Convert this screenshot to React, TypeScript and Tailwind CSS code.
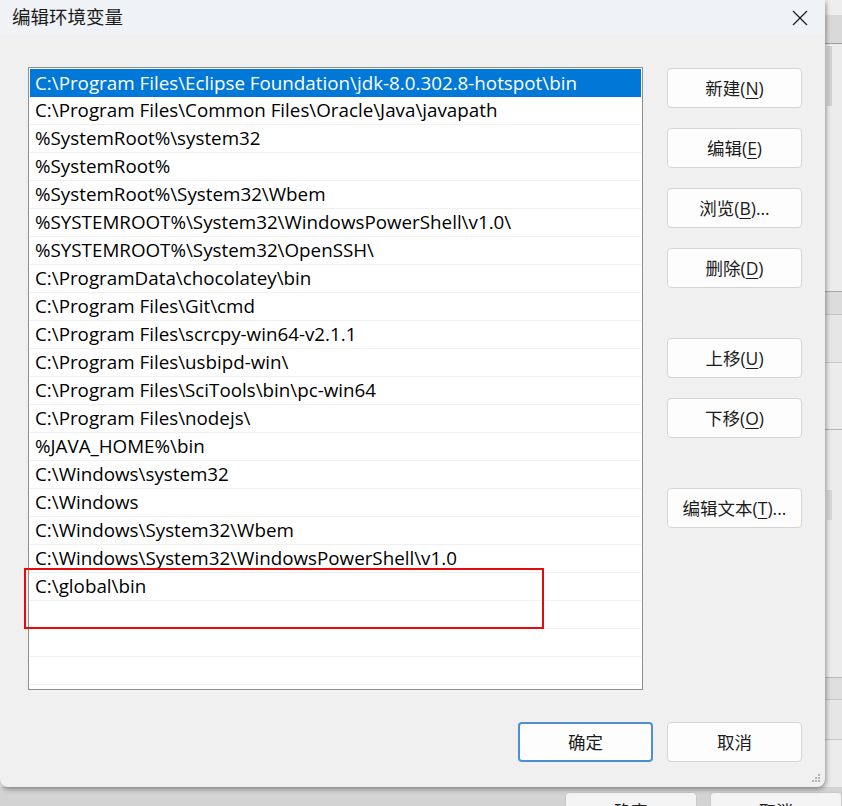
import React from "react";

const rows = [
  "C:\\Program Files\\Eclipse Foundation\\jdk-8.0.302.8-hotspot\\bin",
  "C:\\Program Files\\Common Files\\Oracle\\Java\\javapath",
  "%SystemRoot%\\system32",
  "%SystemRoot%",
  "%SystemRoot%\\System32\\Wbem",
  "%SYSTEMROOT%\\System32\\WindowsPowerShell\\v1.0\\",
  "%SYSTEMROOT%\\System32\\OpenSSH\\",
  "C:\\ProgramData\\chocolatey\\bin",
  "C:\\Program Files\\Git\\cmd",
  "C:\\Program Files\\scrcpy-win64-v2.1.1",
  "C:\\Program Files\\usbipd-win\\",
  "C:\\Program Files\\SciTools\\bin\\pc-win64",
  "C:\\Program Files\\nodejs\\",
  "%JAVA_HOME%\\bin",
  "C:\\Windows\\system32",
  "C:\\Windows",
  "C:\\Windows\\System32\\Wbem",
  "C:\\Windows\\System32\\WindowsPowerShell\\v1.0",
  "C:\\global\\bin",
  "",
  "",
  "",
];

const FONT = '"Open Sans", "Noto Sans CJK SC", sans-serif';

function Btn({
  label,
  hot,
  tail = "",
  extra = "",
  primary = false,
}: {
  label: string;
  hot: string;
  tail?: string;
  extra?: string;
  primary?: boolean;
}) {
  return (
    <div
      className={`flex h-[40px] w-[135px] items-center justify-center rounded-[4px] bg-[#fdfdfd] text-[17.5px] text-[#1b1b1b] ${
        primary ? "border-2 border-[#4f8fd0]" : "border border-[#d5d5d5]"
      } ${extra}`}
    >
      <span>
        {label}
        {hot ? (
          <>
            (<span className="underline underline-offset-[3px]">{hot}</span>)
          </>
        ) : null}
        {tail}
      </span>
    </div>
  );
}

export default function App() {
  return (
    <div
      className="relative h-[806px] w-[842px] overflow-hidden bg-[#e4e4e4]"
      style={{ fontFamily: FONT }}
    >
      {/* window behind the dialog */}
      <div className="absolute inset-0 flex flex-col">
        <div className="h-[15px] shrink-0 bg-[#eeeeee]" />
        <div className="h-[29px] shrink-0 border-b border-[#9e9e9e] bg-[#d9d9d9]" />
        <div className="relative h-[248px] shrink-0 border-b border-[#a9a9a9] bg-[#ececec]">
          <div className="absolute right-[10px] top-[2px] h-[60px] w-[5px] bg-[#d2d2d2]" />
        </div>
        <div className="h-[23px] shrink-0 border-b border-[#c4c4c4] bg-[#dcdcdc]" />
        <div className="h-[48px] shrink-0 border-b border-[#c8c8c8] bg-[#e6e6e6]" />
        <div className="h-[67px] shrink-0 border-b border-[#b5b5b5] bg-[#ececec]" />
        <div className="relative h-[248px] shrink-0 border-b border-[#b8b8b8] bg-[#ececec]">
          <div className="absolute right-[10px] top-[60px] h-[30px] w-[5px] bg-[#d6d6d6]" />
        </div>
        <div className="h-[22px] shrink-0 border-b border-[#c6c6c6] bg-[#dedede]" />
        <div className="h-[40px] shrink-0 border-b border-[#c6c6c6] bg-[#e6e6e6]" />
        <div className="flex-1 bg-[#ececec]" />
        <div className="h-[19px] shrink-0 bg-[#d3d3d3] pl-[565px] pt-[5px]">
          <div className="flex gap-[13px]">
            <div className="flex h-[40px] w-[135px] justify-center rounded-[4px] border border-[#c9c9c9] bg-[#f4f4f4] pt-[6px] text-[17px] text-[#222]">
              确定
            </div>
            <div className="flex h-[40px] w-[135px] justify-center rounded-[4px] border border-[#c9c9c9] bg-[#f4f4f4] pt-[6px] text-[17px] text-[#222]">
              取消
            </div>
          </div>
        </div>
      </div>

      {/* dialog window */}
      <div className="absolute left-0 top-0 flex h-[787px] w-[825px] flex-col overflow-hidden rounded-b-[8px] bg-[#f0f0f0] shadow-[1px_2px_5px_rgba(0,0,0,0.4)]">
        {/* title bar */}
        <div className="flex h-[34px] shrink-0 items-center justify-between bg-[#eff2f6] pl-[12px] pr-[16px]">
          <span className="text-[18.5px] text-[#1a1a1a]">编辑环境变量</span>
          <svg width="16" height="16" viewBox="0 0 16 16" className="mr-[1px] mt-[2px]">
            <path d="M1 1 L15 15 M15 1 L1 15" stroke="#1f1f1f" strokeWidth="1.3" fill="none" />
          </svg>
        </div>

        {/* body */}
        <div className="flex pl-[28px] pt-[33px]">
          <div className="relative h-[623px] w-[615px] border border-[#8e8e8e] bg-white p-px">
            <div className="flex flex-col">
              {rows.map((r, i) => (
                <div
                  key={i}
                  className={`flex h-[28px] items-center whitespace-nowrap pl-[5px] text-[18.8px] leading-none ${
                    i === 0
                      ? "bg-[#0078d7] text-white"
                      : "border-b border-[#f0f0f0] text-black"
                  }`}
                >
                  {r}
                </div>
              ))}
            </div>
            <div className="absolute left-[-5px] top-[500px] h-[61px] w-[520px] border-2 border-[#e30b0b]" />
          </div>

          <div className="ml-[24px] flex flex-col pt-px">
            <Btn label="新建" hot="N" />
            <Btn label="编辑" hot="E" extra="mt-[20px]" />
            <Btn label="浏览" hot="B" tail="..." extra="mt-[20px]" />
            <Btn label="删除" hot="D" extra="mt-[20px]" />
            <Btn label="上移" hot="U" extra="mt-[50px]" />
            <Btn label="下移" hot="O" extra="mt-[20px]" />
            <Btn label="编辑文本" hot="T" tail="..." extra="mt-[50px]" />
          </div>
        </div>

        <div className="mt-[32px] flex justify-end gap-[14px] pr-[23px]">
          <Btn label="确定" hot="" primary />
          <Btn label="取消" hot="" />
        </div>

        {/* resize grip */}
        <div className="relative flex-1">
          <svg width="10" height="10" viewBox="0 0 10 10" className="absolute bottom-[4px] right-[4px]">
            <rect x="7" y="1" width="2" height="2" fill="#b5b5b5" />
            <rect x="4" y="4" width="2" height="2" fill="#b5b5b5" />
            <rect x="7" y="4" width="2" height="2" fill="#b5b5b5" />
            <rect x="1" y="7" width="2" height="2" fill="#b5b5b5" />
            <rect x="4" y="7" width="2" height="2" fill="#b5b5b5" />
            <rect x="7" y="7" width="2" height="2" fill="#b5b5b5" />
          </svg>
        </div>
      </div>
    </div>
  );
}
